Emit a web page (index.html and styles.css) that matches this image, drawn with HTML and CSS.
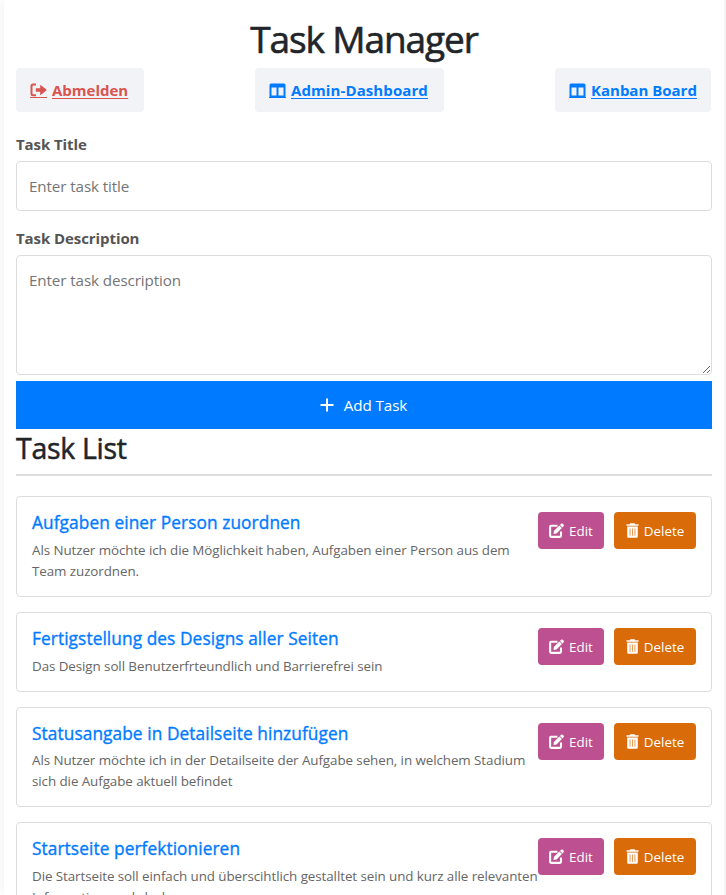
FILE: index.html
```html
<!DOCTYPE html>
<html lang="de">
<head>
<meta charset="utf-8">
<title>Task Manager</title>
<link rel="stylesheet" href="styles.css">
</head>
<body>
<svg class="sprite" aria-hidden="true">
  <symbol id="edit" viewBox="0 0 16 16"><path d="M9 3H2.200Q1.200 3 1.200 4.200v9.400Q1.200 14.800 2.200 14.800h9.600Q12.800 14.800 12.800 13.600V9" fill="none" stroke="currentColor" stroke-width="2.200"/><path d="M4.800 11.800 5.200 8.400 11 2.600 13.800 5.400 8 11.200z M11.700 2 12.900.8Q13.800.1 14.700.9L15.500 1.700Q16.300 2.600 15.500 3.500L14.400 4.700z"/></symbol>
  <symbol id="trash" viewBox="0 0 14 16"><path fill-rule="evenodd" d="M.5 1.200H4L4.700.3H9.300L10 1.200H13.500V3H.5z M1.300 3.700H12.700V14.500Q12.700 15.800 11.400 15.800H2.600Q1.300 15.800 1.300 14.500z M4 5.800V13.700H4.700V5.800z M6.650 5.800V13.700H7.350V5.800z M9.300 5.800V13.700H10V5.800z"/></symbol>
  <symbol id="board" viewBox="0 0 17 15"><path fill-rule="evenodd" d="M2 .5H15Q16.500.5 16.500 2V13.500Q16.500 14.500 15.500 14.500H1.500Q.5 14.500.5 13.500V2Q.5.5 2 .5z M2.500 4.500V12.500H7.500V4.500z M9.500 4.500V12.500H14.500V4.500z"/><path d="M0 14H17V15H0z"/></symbol>
  <symbol id="logout" viewBox="0 0 17 15"><path d="M6 1.500H3Q1.500 1.500 1.500 3V10.800Q1.500 12.300 3 12.300H6" fill="none" stroke="currentColor" stroke-width="2"/><path d="M5.800 5.200H10.200V2.600Q10.200 1.600 11 2.200L16.300 6.500Q16.800 7 16.300 7.500L11 11.800Q10.200 12.400 10.200 11.400V8.800H5.800z"/><path d="M0 14H17V15H0z"/></symbol>
</svg>
<main class="container">
  <h1>Task Manager</h1>
  <nav class="nav">
    <a class="nav-link logout" href="#"><svg class="icon"><use href="#logout"/></svg><span>Abmelden</span></a>
    <a class="nav-link admin" href="#"><svg class="icon"><use href="#board"/></svg><span>Admin-Dashboard</span></a>
    <a class="nav-link kanban" href="#"><svg class="icon"><use href="#board"/></svg><span>Kanban Board</span></a>
  </nav>
  <form class="form">
    <label for="title">Task Title</label>
    <input id="title" type="text" placeholder="Enter task title">
    <label for="desc">Task Description</label>
    <textarea id="desc" placeholder="Enter task description"></textarea>
    <button class="add" type="button"><svg class="plus" viewBox="0 0 14 14"><path d="M7 0.500V13.500M.5 7H13.500" stroke="currentColor" stroke-width="2"/></svg><span>Add Task</span></button>
  </form>
  <h2>Task List</h2>
  <ul class="tasks">
    <li class="task">
      <div class="info"><h3>Aufgaben einer Person zuordnen</h3><p>Als Nutzer möchte ich die Möglichkeit haben, Aufgaben einer Person aus dem<br>Team zuzordnen.</p></div>
      <div class="actions"><button class="btn edit"><svg><use href="#edit"/></svg>Edit</button><button class="btn delete"><svg><use href="#trash"/></svg>Delete</button></div>
    </li>
    <li class="task">
      <div class="info"><h3>Fertigstellung des Designs aller Seiten</h3><p>Das Design soll Benutzerfrteundlich und Barrierefrei sein</p></div>
      <div class="actions"><button class="btn edit"><svg><use href="#edit"/></svg>Edit</button><button class="btn delete"><svg><use href="#trash"/></svg>Delete</button></div>
    </li>
    <li class="task">
      <div class="info"><h3>Statusangabe in Detailseite hinzufügen</h3><p>Als Nutzer möchte ich in der Detailseite der Aufgabe sehen, in welchem Stadium<br>sich die Aufgabe aktuell befindet</p></div>
      <div class="actions"><button class="btn edit"><svg><use href="#edit"/></svg>Edit</button><button class="btn delete"><svg><use href="#trash"/></svg>Delete</button></div>
    </li>
    <li class="task">
      <div class="info"><h3>Startseite perfektionieren</h3><p>Die Startseite soll einfach und überscihtlich gestalltet sein und kurz alle relevanten<br>Informationen abdecken</p></div>
      <div class="actions"><button class="btn edit"><svg><use href="#edit"/></svg>Edit</button><button class="btn delete"><svg><use href="#trash"/></svg>Delete</button></div>
    </li>
  </ul>
</main>
</body>
</html>
```
FILE: styles.css
```css
* { box-sizing: border-box; }
html { height: 100%; overflow: hidden; }
body {
  margin: 0;
  height: 895px;
  overflow: hidden;
  background: #fff;
  color: #212529;
  font: 16px/24px "Open Sans", "Noto Sans", sans-serif;
}
.sprite { display: none; }
svg { fill: currentColor; flex: none; }
.container {
  width: 720px;
  height: 895px;
  overflow: hidden;
  margin-left: 4px;
  padding: 16px 12px 0;
  background: #fff;
  box-shadow: 2px 0 0 #f5f5f5, 0 0 10px rgba(0, 0, 0, .07);
}
h1, h2, h3, p { margin: 0; }
h1 {
  height: 52px;
  text-align: center;
  font-size: 37px;
  line-height: 46px;
  font-weight: 500;
  letter-spacing: -1.100px;
  -webkit-text-stroke: .6px currentColor;
}
.nav { display: flex; justify-content: space-between; padding-right: 1px; }
.nav-link {
  display: flex;
  align-items: center;
  gap: 5px;
  height: 44px;
  padding: 0 14px;
  border-radius: 4px;
  background: #f1f3f7;
  color: #007bff;
  font-size: 15px;
  font-weight: 700;
  text-decoration: none;
}
.nav-link span { text-decoration: underline; text-underline-offset: 2px; text-decoration-thickness: 1px; white-space: nowrap; }
.icon { width: 17px; height: 15px; }
.logout { width: 128px; color: #d9534f; }
.admin { width: 189px; letter-spacing: .1px; }
.kanban { width: 156px; }
.form { display: flex; flex-direction: column; padding-top: 20px; }
label {
  height: 29px;
  color: #555;
  font-size: 15px;
  font-weight: 700;
  letter-spacing: -.08px;
}
input, textarea {
  width: 100%;
  padding: 12px;
  border: 1px solid #ddd;
  border-radius: 4px;
  background: #fff;
  font: 15.200px/24px "Open Sans", "Noto Sans", sans-serif;
  letter-spacing: -.1px;
}
input { height: 50px; margin-bottom: 15px; }
textarea { height: 120px; margin-bottom: 6px; resize: vertical; }
::placeholder { color: #757575; }
.add {
  display: flex;
  align-items: center;
  justify-content: center;
  gap: 10px;
  height: 48px;
  padding: 0 7px 0 6px;
  border: 0;
  background: #007bff;
  color: #fff;
  font: 15.200px/24px "Open Sans", "Noto Sans", sans-serif;
  letter-spacing: -.1px;
}
.plus { width: 14px; height: 14px; }
h2 {
  height: 47px;
  border-bottom: 2px solid #ddd;
  font-size: 28.500px;
  line-height: 38px;
  font-weight: 500;
  letter-spacing: -.3px;
  -webkit-text-stroke: .5px currentColor;
}
.tasks {
  display: flex;
  flex-direction: column;
  gap: 15px;
  margin: 20.400px 0 0;
  padding: 0;
  list-style: none;
}
.task {
  display: flex;
  justify-content: space-between;
  padding: 15px;
  border: 1px solid #ddd;
  border-radius: 4px;
}
.info { width: 506px; white-space: nowrap; }
h3 {
  height: 27.700px;
  color: #007bff;
  font-size: 17.300px;
  line-height: 21px;
  font-weight: 500;
  letter-spacing: .08px;
  -webkit-text-stroke: .35px currentColor;
}
p {
  margin-bottom: -1.100px;
  color: #666;
  font-size: 13.400px;
  line-height: 21px;
  letter-spacing: -.08px;
}
.actions { display: flex; align-items: flex-start; gap: 10px; }
.btn {
  display: flex;
  align-items: center;
  justify-content: center;
  gap: 5px;
  width: 66px;
  height: 37px;
  padding: 2px 0 0;
  border: 0;
  border-radius: 4px;
  background: #bd5090;
  color: #fff;
  font: 13.400px/21px "Open Sans", "Noto Sans", sans-serif;
}
.btn svg { width: 15px; height: 15px; margin-bottom: 2px; }
.delete { width: 82px; background: #d96b08; }
.delete svg { width: 13px; }
```
